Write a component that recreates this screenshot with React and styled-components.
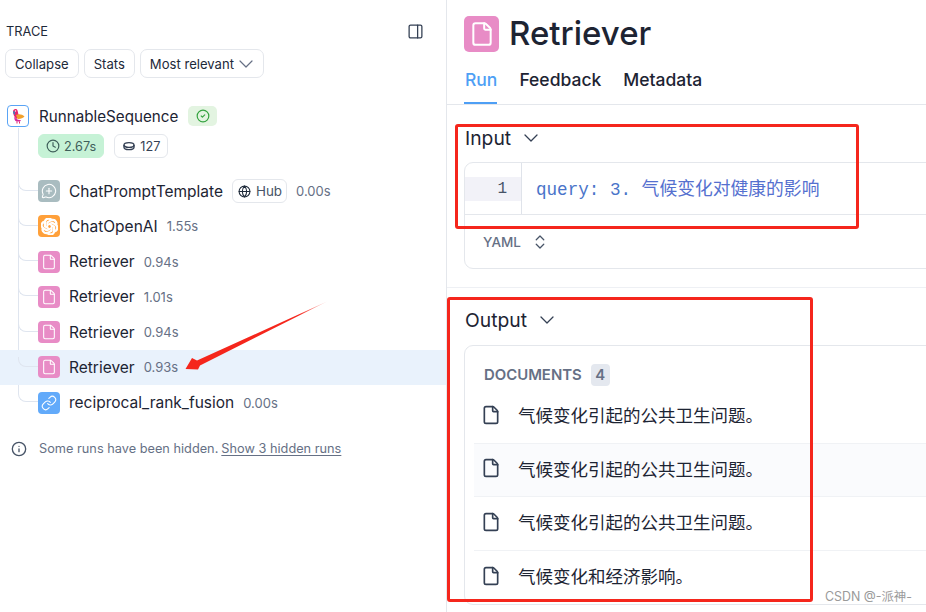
import React from "react";
import styled, { createGlobalStyle } from "styled-components";
import {
  ChevronDown,
  ChevronsUpDown,
  CircleCheck,
  Clock,
  File,
  Globe,
  Info,
  Link,
  MessageCirclePlus,
  PanelRight,
} from "lucide-react";
import { SiOpenai } from "react-icons/si";

const GlobalStyle = createGlobalStyle`
  html, body {
    margin: 0;
    padding: 0;
    background: #fff;
    overflow: hidden;
  }
  body {
    font-family: Inter, "Noto Sans CJK SC", sans-serif;
    color: #1d2433;
  }
`;

const Page = styled.div`
  position: relative;
  display: flex;
  width: 926px;
  height: 612px;
  overflow: hidden;
`;

const Sidebar = styled.aside`
  flex: 0 0 447px;
  box-sizing: border-box;
  border-right: 1px solid #e4e7ec;
  padding-top: 24px;
`;

const SidebarHead = styled.div`
  display: flex;
  justify-content: space-between;
  align-items: center;
  height: 14px;
  padding: 0 22px 0 6px;
  font-size: 12.8px;
  color: #1d2939;
  svg {
    width: 17px;
    height: 17px;
    color: #344054;
    stroke-width: 1.8;
  }
`;

const Toolbar = styled.div`
  display: flex;
  gap: 5px;
  margin: 11px 0 0 5px;
`;

const ToolButton = styled.div`
  display: flex;
  align-items: center;
  height: 29px;
  box-sizing: border-box;
  padding: 0 ${(p) => (p.$menu ? 5 : 9)}px 0 9px;
  border: 1px solid #e4e7ec;
  border-radius: 7px;
  font-size: 13.1px;
  color: #1d2939;
  svg {
    width: 24px;
    height: 24px;
    color: #667085;
    stroke-width: 1.2;
  }
`;

const Tree = styled.div`
  margin-top: 27px;
`;

const RootRow = styled.div`
  display: flex;
  align-items: center;
  height: 22px;
  padding-left: 7px;
  gap: 10px;
  font-size: 15.2px;
`;

const RootIcon = styled.div`
  display: flex;
  align-items: center;
  justify-content: center;
  width: 22px;
  height: 22px;
  box-sizing: border-box;
  border: 1px solid #5aa4f5;
  border-radius: 4px;
`;

const StatusBadge = styled.div`
  display: flex;
  align-items: center;
  justify-content: center;
  width: 29px;
  height: 20px;
  border-radius: 5px;
  background: #e3f4e1;
  color: #34a33f;
  svg {
    width: 14px;
    height: 14px;
  }
`;

const StatsRow = styled.div`
  display: flex;
  gap: 10px;
  margin: 7px 0 0 38px;
`;

const Stat = styled.div`
  display: flex;
  align-items: center;
  gap: 4px;
  height: 24px;
  box-sizing: border-box;
  padding: 0 7px;
  border: 1px solid ${(p) => (p.$green ? "#c6f2d6" : "#e4e7ec")};
  border-radius: 6px;
  background: ${(p) => (p.$green ? "#c6f2d6" : "#fff")};
  color: ${(p) => (p.$green ? "#3f5f5a" : "#344054")};
  font-size: 12.7px;
  svg {
    width: 14px;
    height: 14px;
  }
`;

const Children = styled.div`
  position: relative;
  margin-top: 15.5px;
  &::before {
    content: "";
    position: absolute;
    left: 18px;
    top: -46px;
    bottom: 26px;
    width: 1px;
    background: #dfe5ef;
  }
`;

const Row = styled.div`
  position: relative;
  display: flex;
  align-items: center;
  height: 35.25px;
  padding-left: 38px;
  background: ${(p) => (p.$active ? "#e9f2fc" : "transparent")};
  font-size: 15.5px;
  &::before {
    content: "";
    position: absolute;
    left: 18px;
    top: 7px;
    width: 20px;
    height: 10px;
    box-sizing: border-box;
    border-left: 1px solid #dfe5ef;
    border-bottom: 1px solid #dfe5ef;
    border-bottom-left-radius: 8px;
  }
`;

const RunIcon = styled.div`
  display: flex;
  align-items: center;
  justify-content: center;
  flex: 0 0 22px;
  height: 22px;
  border-radius: 4px;
  background: ${(p) => p.$color};
  color: #fff;
  z-index: 1;
  svg {
    width: ${(p) => p.$size || 16}px;
    height: ${(p) => p.$size || 16}px;
    stroke-width: 1.6;
  }
`;

const RunName = styled.span`
  margin-left: 9px;
  color: #1d2433;
`;

const HubTag = styled.div`
  display: flex;
  align-items: center;
  gap: 5px;
  height: 24px;
  box-sizing: border-box;
  margin-left: 9px;
  padding: 0 4px 0 5px;
  border: 1px solid #e4e7ec;
  border-radius: 6px;
  font-size: 13.4px;
  color: #475467;
  svg {
    width: 13px;
    height: 13px;
    color: #1d2939;
  }
`;

const Duration = styled.span`
  margin-left: 9px;
  font-size: 13px;
  color: #667085;
`;

const Notice = styled.div`
  display: flex;
  align-items: center;
  gap: 12px;
  margin: 20.5px 0 0 11px;
  font-size: 12.75px;
  color: #667085;
  svg {
    width: 16px;
    height: 16px;
    color: #475467;
  }
  u {
    margin-left: 3px;
    text-underline-offset: 2px;
  }
`;

const Main = styled.main`
  flex: 1;
  min-width: 0;
`;

const TitleRow = styled.div`
  display: flex;
  align-items: center;
  gap: 10px;
  padding: 16px 0 0 17px;
  height: 36px;
`;

const TitleIcon = styled.div`
  display: flex;
  align-items: center;
  justify-content: center;
  width: 35px;
  height: 36px;
  border-radius: 5px;
  background: #e88cc6;
  color: #fff;
  svg {
    width: 26px;
    height: 26px;
    stroke-width: 1.85;
  }
`;

const Title = styled.h1`
  margin: -2px 0 0;
  font-size: 33px;
  font-weight: 500;
  color: #1d2433;
`;

const Tabs = styled.nav`
  display: flex;
  gap: 22px;
  height: 53px;
  box-sizing: border-box;
  padding: 18px 0 0 17px;
  border-bottom: 1px solid #e4e7ec;
`;

const Tab = styled.div`
  height: 34px;
  box-sizing: border-box;
  padding-left: ${(p) => (p.$active ? 1 : 0)}px;
  border-bottom: 2px solid ${(p) => (p.$active ? "#4e9ff5" : "transparent")};
  font-size: 17.5px;
  font-weight: 500;
  line-height: 20px;
  color: ${(p) => (p.$active ? "#4e9ff5" : "#1d2433")};
`;

const Section = styled.section`
  padding: 21px 0 18px 17px;
  border-bottom: 1px solid #eef0f4;
`;

const OutputSection = styled.section`
  padding: 20px 0 0 17px;
`;

const SectionHead = styled.div`
  display: flex;
  align-items: center;
  gap: 8px;
  height: 24px;
  padding-left: 1px;
  font-size: 19.3px;
  color: #1d2433;
  svg {
    width: 24px;
    height: 24px;
    color: #344054;
    stroke-width: 1.3;
  }
`;

const Card = styled.div`
  width: 500px;
  margin-top: 12px;
  box-sizing: border-box;
  border: 1px solid #e4e7ec;
  border-radius: 9px;
`;

const OutputCard = styled(Card)`
  margin-top: 13px;
`;

const CodeArea = styled.div`
  display: flex;
  height: 51px;
  border-bottom: 1px solid #e4e7ec;
`;

const Gutter = styled.div`
  flex: 0 0 57px;
  box-sizing: border-box;
  padding-top: 14px;
  border-right: 1px solid #dfe3ea;
`;

const LineNumber = styled.div`
  height: 24px;
  padding-right: 14px;
  background: #f2f2f8;
  text-align: right;
  font: 16px/25px "Liberation Mono", monospace;
  color: #475467;
`;

const Code = styled.div`
  padding: 12px 0 0 14px;
  font: 17.6px/24px "Liberation Mono", "Noto Sans CJK SC", monospace;
  color: #4a74c9;
  white-space: pre;
`;

const CodeCjk = styled.span`
  font-family: "Noto Sans CJK SC", sans-serif;
  font-size: 17.8px;
  color: #5570cf;
`;

const CardFoot = styled.div`
  display: flex;
  align-items: center;
  gap: 10px;
  height: 53px;
  padding-left: 18px;
  font-size: 13.5px;
  font-weight: 500;
  color: #667085;
  svg {
    width: 18px;
    height: 18px;
    color: #475467;
    stroke-width: 1.7;
  }
`;

const DocsHead = styled.div`
  display: flex;
  align-items: center;
  gap: 9px;
  padding: 18px 0 0 19px;
  font-size: 14.9px;
  font-weight: 600;
  color: #667085;
`;

const CountBadge = styled.span`
  display: flex;
  align-items: center;
  justify-content: center;
  width: 19px;
  height: 22px;
  border-radius: 4px;
  background: #e4e8ef;
`;

const DocList = styled.div`
  margin: 4px 0 0 9px;
`;

const Doc = styled.div`
  display: flex;
  align-items: center;
  gap: 17px;
  height: 53.5px;
  box-sizing: border-box;
  padding: 0 0 3px 7px;
  border-bottom: ${(p) => (p.$last ? "none" : "1px solid #f0f2f5")};
  background: ${(p) => (p.$shade ? "#fafbfd" : "#fff")};
  font-size: 17.5px;
  color: #1d2433;
  svg {
    width: 20px;
    height: 20px;
    flex: none;
    color: #344054;
    stroke-width: 2;
  }
`;

const Mark = styled.div`
  position: absolute;
  box-sizing: border-box;
  border: 3px solid #f5261c;
  border-radius: 3px;
  pointer-events: none;
`;

const InputMark = styled(Mark)`
  left: 455px;
  top: 124px;
  width: 404px;
  height: 105px;
`;

const OutputMark = styled(Mark)`
  left: 447px;
  top: 297px;
  width: 366px;
  height: 305px;
`;

const Arrow = styled.svg`
  position: absolute;
  left: 0;
  top: 0;
  width: 926px;
  height: 612px;
  pointer-events: none;
`;

const Watermark = styled.div`
  position: absolute;
  left: 825px;
  top: 589px;
  font-size: 12.4px;
  line-height: 16px;
  color: #9a9a9a;
`;

const TokenIcon = () => (
  <svg viewBox="0 0 14 14" fill="none" stroke="currentColor" strokeWidth="1.4">
    <ellipse cx="7" cy="6" rx="5" ry="2.4" />
    <path d="M2 6v2.2c0 1.3 2.2 2.4 5 2.4s5-1.1 5-2.4V6" />
  </svg>
);

const ParrotLogo = () => (
  <svg width="13" height="16" viewBox="0 0 13 16">
    <path d="M1 3.500C1 1 4.500 0 5.500 2.500c.8 2 .5 3.500 1.500 5L4.500 11C2.500 9 1 6.500 1 3.500z" fill="#e8246c" />
    <path d="M4 7c2.500-1.500 6-1 8.500 1.500C11 10 8 11.500 5.500 11z" fill="#f0a02c" />
    <path d="M2.500 8.500c1 2.500 3.500 4 6.500 3.500l-1 1.500H4.500C2.500 13 2 10.500 2.500 8.500z" fill="#d4289a" />
    <path d="M1 3.500c0 2 1 3 2 3.500 0-1.500 0-3-.5-4z" fill="#3b82c4" />
    <path d="M4.500 13.500h1v2h-1zM7 13.500h1v2H7z" fill="#e8246c" />
    <circle cx="3.500" cy="3" r=".7" fill="#fff" />
  </svg>
);

const PINK = "#e88cc6";

const runs = [
  { name: "Retriever", time: "0.94s" },
  { name: "Retriever", time: "1.01s" },
  { name: "Retriever", time: "0.94s" },
  { name: "Retriever", time: "0.93s", active: true },
];

const docs = [
  "气候变化引起的公共卫生问题。",
  "气候变化引起的公共卫生问题。",
  "气候变化引起的公共卫生问题。",
  "气候变化和经济影响。",
];

export default function App() {
  return (
    <Page>
      <GlobalStyle />
      <Sidebar>
        <SidebarHead>
          <span>TRACE</span>
          <PanelRight />
        </SidebarHead>
        <Toolbar>
          <ToolButton>Collapse</ToolButton>
          <ToolButton>Stats</ToolButton>
          <ToolButton $menu>
            Most relevant
            <ChevronDown />
          </ToolButton>
        </Toolbar>
        <Tree>
          <RootRow>
            <RootIcon>
              <ParrotLogo />
            </RootIcon>
            <span>RunnableSequence</span>
            <StatusBadge>
              <CircleCheck />
            </StatusBadge>
          </RootRow>
          <StatsRow>
            <Stat $green>
              <Clock />
              2.67s
            </Stat>
            <Stat>
              <TokenIcon />
              127
            </Stat>
          </StatsRow>
          <Children>
            <Row>
              <RunIcon $color="#a9bcc0">
                <MessageCirclePlus />
              </RunIcon>
              <RunName>ChatPromptTemplate</RunName>
              <HubTag>
                <Globe />
                Hub
              </HubTag>
              <Duration>0.00s</Duration>
            </Row>
            <Row>
              <RunIcon $color="#ffa03a" $size={17}>
                <SiOpenai />
              </RunIcon>
              <RunName>ChatOpenAI</RunName>
              <Duration>1.55s</Duration>
            </Row>
            {runs.map((run, idx) => (
              <Row key={idx} $active={run.active}>
                <RunIcon $color={PINK}>
                  <File />
                </RunIcon>
                <RunName>{run.name}</RunName>
                <Duration>{run.time}</Duration>
              </Row>
            ))}
            <Row>
              <RunIcon $color="#62aafa">
                <Link />
              </RunIcon>
              <RunName>reciprocal_rank_fusion</RunName>
              <Duration>0.00s</Duration>
            </Row>
          </Children>
        </Tree>
        <Notice>
          <Info />
          <span>
            Some runs have been hidden.<u>Show 3 hidden runs</u>
          </span>
        </Notice>
      </Sidebar>

      <Main>
        <TitleRow>
          <TitleIcon>
            <File />
          </TitleIcon>
          <Title>Retriever</Title>
        </TitleRow>
        <Tabs>
          <Tab $active>Run</Tab>
          <Tab>Feedback</Tab>
          <Tab>Metadata</Tab>
        </Tabs>
        <Section>
          <SectionHead>
            Input
            <ChevronDown />
          </SectionHead>
          <Card>
            <CodeArea>
              <Gutter>
                <LineNumber>1</LineNumber>
              </Gutter>
              <Code>
                query: 3. <CodeCjk>气候变化对健康的影响</CodeCjk>
              </Code>
            </CodeArea>
            <CardFoot>
              YAML
              <ChevronsUpDown />
            </CardFoot>
          </Card>
        </Section>
        <OutputSection>
          <SectionHead>
            Output
            <ChevronDown />
          </SectionHead>
          <OutputCard>
            <DocsHead>
              DOCUMENTS
              <CountBadge>4</CountBadge>
            </DocsHead>
            <DocList>
              {docs.map((doc, idx) => (
                <Doc key={idx} $shade={idx === 1} $last={idx === 3}>
                  <File />
                  {doc}
                </Doc>
              ))}
            </DocList>
          </OutputCard>
        </OutputSection>
      </Main>

      <InputMark />
      <OutputMark />
      <Arrow viewBox="0 0 926 612">
        <defs>
          <linearGradient id="arrowFade" x1="186" y1="369" x2="327" y2="301" gradientUnits="userSpaceOnUse">
            <stop offset="0.8" stopColor="#f5261c" />
            <stop offset="1" stopColor="#f5261c" stopOpacity="0.25" />
          </linearGradient>
        </defs>
        <path d="M185.500 369L192 358L197 360.500L327 301.500L200 365.500L198 369.500Z" fill="url(#arrowFade)" />
      </Arrow>
      <Watermark>CSDN @-派神-</Watermark>
    </Page>
  );
}
